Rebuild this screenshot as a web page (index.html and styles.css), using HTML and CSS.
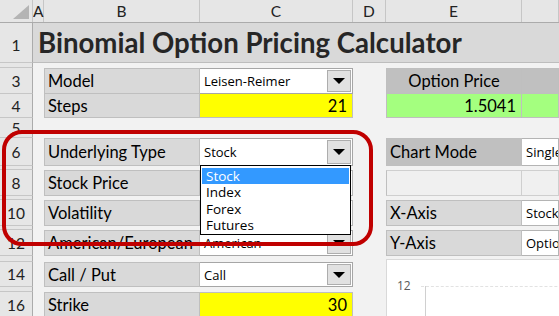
FILE: index.html
```html
<!DOCTYPE html>
<html>
<head>
<meta charset="utf-8">
<link rel="stylesheet" href="styles.css">
</head>
<body>
<div class="sheet">
  <div class="row colhdr">
    <div class="corner"><span class="tri"></span></div>
    <div class="ch a">A</div>
    <div class="ch b">B</div>
    <div class="ch c">C</div>
    <div class="ch d">D</div>
    <div class="ch e">E</div>
    <div class="ch f"></div>
  </div>

  <div class="row h40">
    <div class="rh">1</div>
    <div class="title">Binomial Option Pricing Calculator</div>
  </div>

  <div class="row h5"><div class="rh"></div></div>

  <div class="row h26">
    <div class="rh">3</div>
    <div class="a"></div>
    <div class="b cell lbl">Model</div>
    <div class="c cell combo"><span class="val">Leisen-Reimer</span><span class="btn"><i></i></span></div>
    <div class="d"></div>
    <div class="e cell dark center">Option Price</div>
    <div class="f cell dark"></div>
  </div>

  <div class="row h24">
    <div class="rh">4</div>
    <div class="a"></div>
    <div class="b cell lbl notop">Steps</div>
    <div class="c cell yellow num notop">21</div>
    <div class="d"></div>
    <div class="e cell green num notop">1.5041</div>
    <div class="f cell green notop"></div>
  </div>

  <div class="row h20"><div class="rh">5</div></div>

  <div class="row h28">
    <div class="rh">6</div>
    <div class="a"></div>
    <div class="b cell lbl">Underlying Type</div>
    <div class="c cell combo"><span class="val">Stock</span><span class="btn"><i></i></span></div>
    <div class="d"></div>
    <div class="e cell dark">Chart Mode</div>
    <div class="f cell white small">Single</div>
  </div>

  <div class="row h4"><div class="rh"></div></div>

  <div class="row h26">
    <div class="rh">8</div>
    <div class="a"></div>
    <div class="b cell lbl">Stock Price</div>
    <div class="c cell white"></div>
    <div class="d"></div>
    <div class="e cell blank"></div>
    <div class="f cell blank"></div>
  </div>

  <div class="row h4"><div class="rh"></div></div>

  <div class="row h26">
    <div class="rh">10</div>
    <div class="a"></div>
    <div class="b cell lbl">Volatility</div>
    <div class="c cell white"></div>
    <div class="d"></div>
    <div class="e cell lbl">X-Axis</div>
    <div class="f cell white small">Stock</div>
  </div>

  <div class="row h4"><div class="rh"></div></div>

  <div class="row h26">
    <div class="rh">12</div>
    <div class="a"></div>
    <div class="b cell lbl">American/European</div>
    <div class="c cell combo"><span class="val">American</span><span class="btn"><i></i></span></div>
    <div class="d"></div>
    <div class="e cell lbl">Y-Axis</div>
    <div class="f cell white small">Option</div>
  </div>

  <div class="row h6"><div class="rh"></div></div>

  <div class="row h25">
    <div class="rh">14</div>
    <div class="a"></div>
    <div class="b cell lbl">Call / Put</div>
    <div class="c cell combo"><span class="val">Call</span><span class="btn"><i></i></span></div>
  </div>

  <div class="row h5"><div class="rh"></div></div>

  <div class="row h26">
    <div class="rh">16</div>
    <div class="a"></div>
    <div class="b cell lbl">Strike</div>
    <div class="c cell yellow num">30</div>
  </div>

  <div class="chart">
    <span class="ylabel">12</span>
    <span class="grid"></span>
    <span class="axis"></span>
  </div>

  <ul class="list">
    <li class="sel">Stock</li>
    <li>Index</li>
    <li>Forex</li>
    <li>Futures</li>
  </ul>

  <div class="ring"></div>
</div>
</body>
</html>
```

FILE: styles.css
```css
html, body {
  margin: 0;
  padding: 0;
  background: #f2f2f2;
}
.sheet {
  position: relative;
  width: 559px;
  height: 316px;
  overflow: hidden;
  font-family: Lato, "Liberation Sans", sans-serif;
  color: #000;
  background: #f2f2f2;
}
.row {
  display: flex;
  box-sizing: border-box;
}
.h40 { height: 40px; }
.h28 { height: 28px; }
.h26 { height: 26px; }
.h25 { height: 25px; }
.h24 { height: 24px; }
.h20 { height: 20px; }
.h6 { height: 6px; }
.h5 { height: 5px; }
.h4 { height: 4px; }

.colhdr {
  height: 23px;
  background: #e6e6e6;
  border-bottom: 1px solid #ababab;
}
.corner {
  position: relative;
  width: 33px;
  box-sizing: border-box;
  border-right: 1px solid #c6c6c6;
}
.tri {
  position: absolute;
  right: 3px;
  bottom: 3px;
  width: 0;
  height: 0;
  border-left: 16px solid transparent;
  border-bottom: 14px solid #b4b4b4;
}
.ch {
  box-sizing: border-box;
  border-right: 1px solid #c6c6c6;
  text-align: center;
  font-size: 15.5px;
  line-height: 22px;
  color: #222;
}
.a { width: 11px; flex: none; }
.b { width: 156px; flex: none; }
.c { width: 153px; flex: none; }
.d { width: 33px; flex: none; }
.e { width: 136px; flex: none; }
.f { flex: 1; }

.rh {
  width: 33px;
  flex: none;
  box-sizing: border-box;
  background: #e6e6e6;
  border-right: 1px solid #ababab;
  border-bottom: 1px solid #c6c6c6;
  color: #222;
  font-size: 15.5px;
  display: flex;
  align-items: center;
  justify-content: center;
  overflow: hidden;
}
.h40 .rh { padding-top: 4px; }

.title {
  flex: 1;
  background: #d9d9d9;
  border-bottom: 1px solid #bdbdbd;
  font-weight: 700;
  font-size: 27.6px;
  color: #262626;
  padding-left: 5px;
  display: flex;
  align-items: center;
  white-space: nowrap;
}

.cell {
  box-sizing: border-box;
  border: 1px solid #bfbfbf;
  border-left: 0;
  display: flex;
  align-items: center;
  font-size: 16.5px;
  white-space: nowrap;
  overflow: hidden;
}
.b.cell, .e.cell { border-left: 1px solid #bfbfbf; }
.notop { border-top: 0; }
.lbl {
  background: #d9d9d9;
  padding-left: 3px;
}
.dark {
  background: #c0c0c0;
  padding-left: 3px;
}
.center {
  justify-content: center;
  padding-left: 0;
}
.yellow { background: #ffff00; }
.green { background: #a4ff7f; }
.num {
  justify-content: flex-end;
  padding-right: 5px;
}
.white { background: #fff; border-color: #b4b4b4; }
.blank { background: #f0f0f0; border-color: #cfcfcf; }
.small {
  font-family: "Open Sans", "Liberation Sans", sans-serif;
  font-size: 13px;
  padding-left: 4px;
}
.combo {
  background: #fff;
  border-color: #a6a6a6;
  justify-content: space-between;
  font-family: "Open Sans", "Liberation Sans", sans-serif;
  font-size: 13px;
  padding-left: 4px;
  padding-right: 1px;
}
.btn {
  box-sizing: border-box;
  width: 24px;
  height: calc(100% - 2px);
  background: #e1e1e1;
  border: 1px solid #adadad;
  display: flex;
  align-items: center;
  justify-content: center;
}
.btn i {
  width: 0;
  height: 0;
  border-left: 6px solid transparent;
  border-right: 6px solid transparent;
  border-top: 6px solid #000;
}

.chart {
  position: absolute;
  left: 386px;
  top: 259px;
  width: 200px;
  height: 80px;
  background: #fff;
  border: 1px solid #d9d9d9;
}
.ylabel {
  position: absolute;
  left: 10px;
  top: 17px;
  font-family: "Open Sans", "Liberation Sans", sans-serif;
  font-size: 12px;
  color: #595959;
}
.grid {
  position: absolute;
  left: 34px;
  right: 0;
  top: 26px;
  border-top: 1px dashed #e2e2e2;
}
.axis {
  position: absolute;
  left: 38px;
  top: 26px;
  bottom: 0;
  border-left: 1px solid #d0d0d0;
}

.list {
  position: absolute;
  left: 200px;
  top: 165px;
  width: 151px;
  height: 70px;
  box-sizing: border-box;
  margin: 0;
  padding: 2px 1px;
  list-style: none;
  background: #fff;
  border: 1px solid #000;
  font-family: "Open Sans", "Liberation Sans", sans-serif;
  font-size: 13.5px;
  color: #000;
}
.list li {
  height: 16.3px;
  line-height: 16px;
  padding-left: 4px;
}
.list li.sel {
  background: #3399ff;
  color: #fff;
}

.ring {
  position: absolute;
  left: 2px;
  top: 130px;
  width: 371px;
  height: 116px;
  box-sizing: border-box;
  border: 4.5px solid #c00000;
  border-radius: 20px;
}
```
